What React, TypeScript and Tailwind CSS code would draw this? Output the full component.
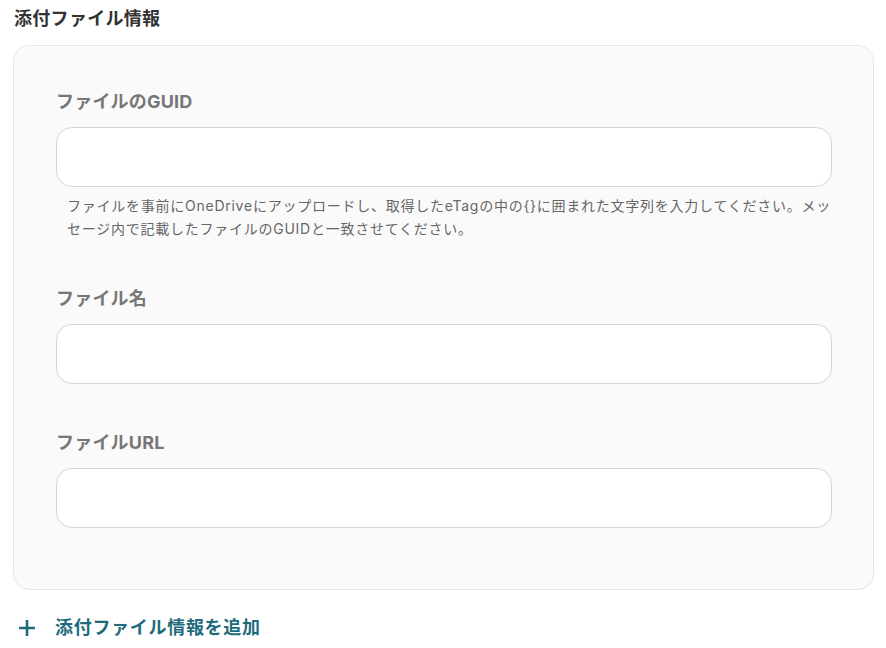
import React from "react";

const fields = [
  {
    label: "ファイルのGUID",
    help: "ファイルを事前にOneDriveにアップロードし、取得したeTagの中の{}に囲まれた文字列を入力してください。メッセージ内で記載したファイルのGUIDと一致させてください。",
  },
  { label: "ファイル名" },
  { label: "ファイルURL" },
];

function Field({ label, help }: { label: string; help?: string }) {
  return (
    <div className="flex flex-col">
      <label className="text-[18px] font-bold leading-[26px] tracking-[0.2px] text-[#777777]">{label}</label>
      <input
        type="text"
        className="mt-[12px] h-[60px] w-full rounded-[16px] border border-[#d4d6da] bg-white px-4 text-[15px] outline-none"
      />
      {help && (
        <p className="mt-[7px] pl-[11px] text-[14px] leading-[23px] tracking-[0.75px] text-[#666666]">{help}</p>
      )}
    </div>
  );
}

export default function App() {
  return (
    <div
      className="min-h-[648px] w-[886px] bg-white px-[13px] pt-[6px]"
      style={{ fontFamily: '"Inter", "Noto Sans CJK JP", sans-serif' }}
    >
      <h2 className="pl-[1px] text-[18px] font-bold leading-[26px] tracking-[0.3px] text-[#333333]">添付ファイル情報</h2>
      <div className="mt-[13px] flex w-[861px] flex-col gap-[46px] rounded-[16px] border border-[#e6e6e6] bg-[#fafafa] pb-[61px] pl-[42px] pr-[41px] pt-[43px]">
        {fields.map((f) => (
          <Field key={f.label} label={f.label} help={f.help} />
        ))}
      </div>
      <button className="mt-[25px] flex items-center gap-[19px] pl-[5px] text-[18px] font-bold leading-[26px] tracking-[0.7px] text-[#1d6b7b]">
        <svg width="18" height="18" viewBox="0 0 18 18" fill="none" stroke="currentColor" strokeWidth="2.6">
          <path d="M9 1v16M1 9h16" />
        </svg>
        添付ファイル情報を追加
      </button>
    </div>
  );
}
